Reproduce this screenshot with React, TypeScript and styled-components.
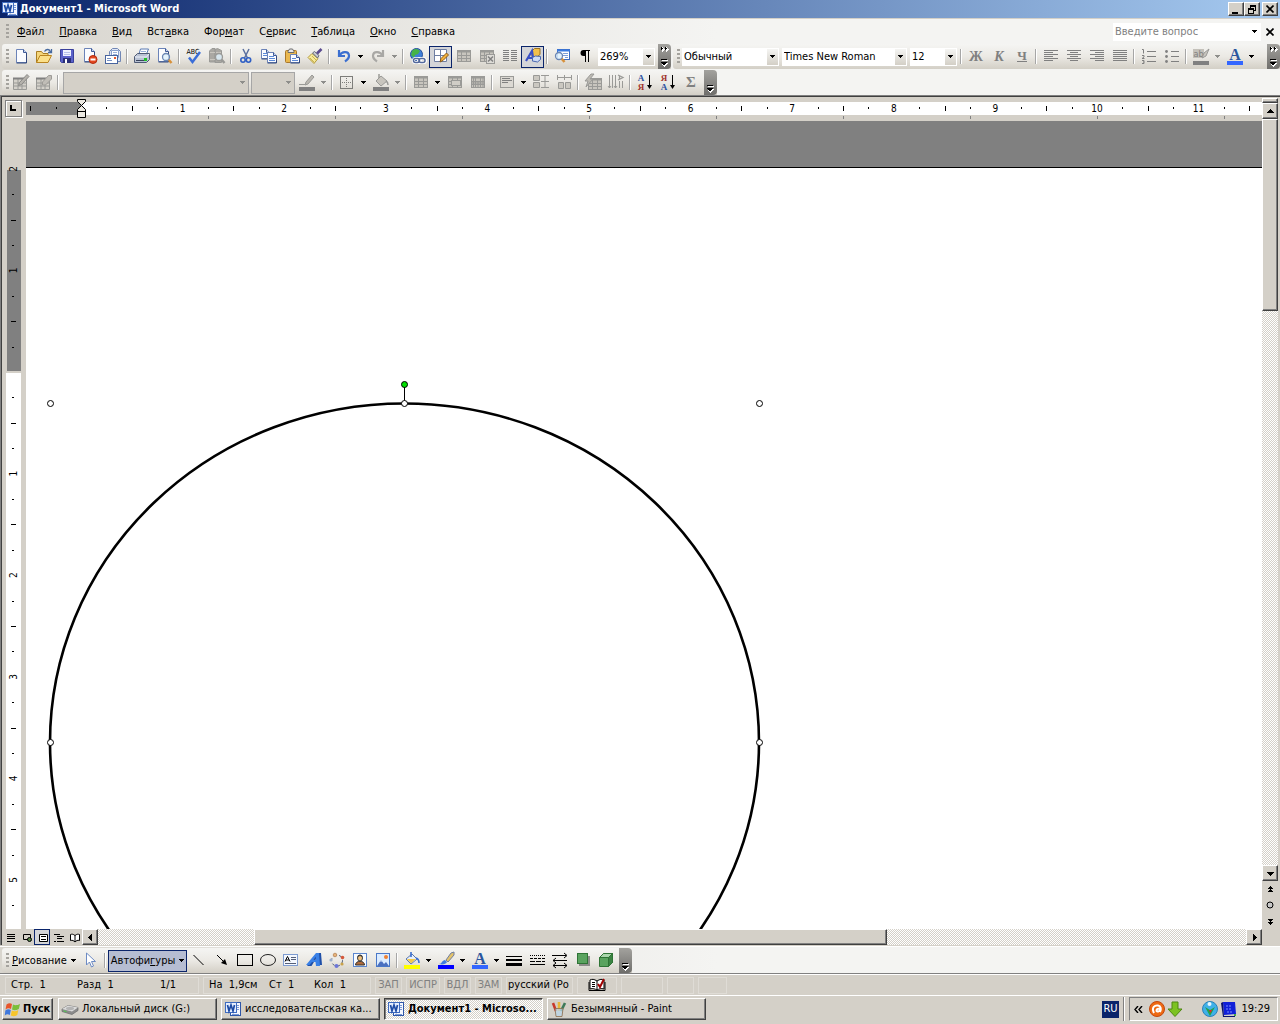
import React from "react";
import styled, { createGlobalStyle, css } from "styled-components";

const UI = `"DejaVu Sans Condensed", "Noto Sans", "Liberation Sans", sans-serif`;
const FACE = "#d4d0c8";
const NAVY = "#0a246a";
const GREY = "#808080";

const Global = createGlobalStyle`
  * { box-sizing: border-box; }
  html, body { margin: 0; padding: 0; }
  body { background: ${FACE}; overflow: hidden; }
  button, input, select { font: inherit; color: inherit; margin: 0; padding: 0; border: 0; background: none; }
  svg { display: block; flex: none; }
`;

const raised = css`
  background: ${FACE};
  border: 1px solid;
  border-color: #fff #404040 #404040 #fff;
  box-shadow: inset -1px -1px 0 ${GREY};
`;

const Window = styled.div`
  display: flex;
  flex-direction: column;
  height: 100vh;
  min-width: 0;
  overflow: hidden;
  font-family: ${UI};
  font-size: 11px;
  line-height: 14px;
  color: #000;
  white-space: nowrap;
  background: ${FACE};
`;

/* ---------- title ---------- */
const TitleBar = styled.header`
  display: flex;
  align-items: center;
  height: 19px;
  flex: none;
  padding: 0 2px;
  gap: 2px;
  border-bottom: 1px solid ${FACE};
  background: linear-gradient(90deg, #0a246a, #a6caf0);
  color: #fff;
`;
const Title = styled.h1`
  flex: 1;
  margin: 0;
  font-size: 11px;
  font-weight: bold;
`;
const CaptionButtons = styled.div`
  display: flex;
  button:last-child { margin-left: 2px; }
`;
const CaptionButton = styled.button`
  ${raised}
  display: grid;
  place-items: center;
  width: 16px;
  height: 14px;
`;

/* ---------- docked bars ---------- */
const Dock = styled.div`
  display: flex;
  flex-direction: column;
  flex: none;
  background: linear-gradient(90deg, #d8d5ce, #f4f4f2 56%);
`;
const MenuBar = styled.nav`
  display: flex;
  align-items: center;
  height: 25px;
  padding: 0 2px 0 6px;
`;
const MenuItem = styled.button`
  height: 20px;
  padding: 0 7px 0 8px;
`;
const Spacer = styled.span`
  flex: 1;
`;
const Ask = styled.label`
  display: flex;
  align-items: center;
  width: 148px;
  height: 18px;
  padding: 0 4px 0 2px;
  background: #fff;
  input { flex: 1; min-width: 0; outline: 0; }
  input::placeholder { color: ${GREY}; opacity: 1; }
`;
const CloseDoc = styled.button`
  display: grid;
  place-items: center;
  width: 17px;
  height: 18px;
`;
const BarRow = styled.div`
  display: flex;
`;
const Toolbar = styled.div<{ $grow?: boolean }>`
  display: flex;
  align-items: center;
  height: 25px;
  flex: ${(p) => (p.$grow ? "1 0 auto" : "none")};
  padding-left: 4px;
  margin-left: 2px;
  border-radius: 3px 0 0 3px;
  background: linear-gradient(#f5f5f3, #ebe9e4 50%, #d3cfc6);
`;
const TopDock = styled(Dock)`
  ${BarRow} + ${BarRow} { margin-top: 1px; }
`;
const Handle = styled.span`
  width: 3px;
  height: 15px;
  flex: none;
  background: repeating-linear-gradient(#a5a39e 0 2px, transparent 2px 4px);
`;
const ToolButton = styled.button<{ $on?: boolean; $wide?: boolean }>`
  display: flex;
  align-items: center;
  justify-content: center;
  gap: 4px;
  flex: none;
  width: ${(p) => (p.$wide ? "auto" : "23px")};
  padding: ${(p) => (p.$wide ? "0 2px" : "0")};
  height: 22px;
  border: 1px solid ${(p) => (p.$on ? NAVY : "transparent")};
  background: ${(p) => (p.$on ? (p.$wide ? "#b6bdd2" : "#d4d5d8") : "none")};
`;
const DropButton = styled.button`
  display: grid;
  place-items: center;
  width: 11px;
  height: 22px;
  flex: none;
`;
const Sep = styled.span`
  width: 6px;
  height: 15px;
  flex: none;
  border-left: 2px solid transparent;
  background: linear-gradient(90deg, #a6a6a6 1px, #fff 1px 2px, transparent 2px) padding-box;
`;
const Combo = styled.label<{ $w: number; $off?: boolean }>`
  display: flex;
  align-items: center;
  width: ${(p) => p.$w}px;
  height: ${(p) => (p.$off ? 22 : 18)}px;
  flex: none;
  margin: 0 ${(p) => (p.$off ? 0 : 1)}px 0 2px;
  border: 1px solid ${(p) => (p.$off ? "#a6a6a6" : "#fff")};
  background: ${(p) => (p.$off ? FACE : "#fff")};
  select { appearance: none; flex: 1; min-width: 0; height: 16px; padding-left: 1px; outline: 0; }
`;
const ComboArrow = styled.span<{ $off?: boolean }>`
  display: grid;
  place-items: center;
  width: 11px;
  height: 16px;
  background: ${(p) => (p.$off ? "none" : "linear-gradient(#f5f5f3, #d3cfc6)")};
  pointer-events: none;
`;
const Cap = styled.button`
  display: flex;
  flex-direction: column;
  align-items: center;
  justify-content: flex-end;
  gap: 7px;
  width: 13px;
  height: 25px;
  margin-left: 2px;
  padding-bottom: 2px;
  flex: none;
  border-radius: 0 4px 4px 0;
  background: linear-gradient(#a3a29e, #6f6e6b);
`;
const CapPush = styled.span`
  flex: 1;
  display: flex;
  justify-content: flex-end;
`;

/* ---------- workspace ---------- */
const Workspace = styled.main`
  display: flex;
  flex: 1;
  min-height: 0;
  padding-right: 2px;
  border-top: 1px solid ${GREY};
  border-left: 1px solid ${GREY};
  box-shadow: inset 1px 1px 0 #404040;
`;
const Column = styled.div`
  display: flex;
  flex-direction: column;
  flex: 1;
  min-width: 0;
  padding-left: 1px;
`;
const RulerRow = styled.div`
  display: flex;
  height: 25px;
  flex: none;
  padding-top: 1px;
`;
const RulerCorner = styled.div`
  width: 24px;
  flex: none;
  padding: 3px 0 0 3px;
`;
const TabButton = styled.button`
  display: grid;
  place-items: center;
  width: 17px;
  height: 17px;
  border: 1px solid ${GREY};
  box-shadow: inset 1px 1px 0 #fff, 1px 1px 0 #fff;
`;
const HRuler = styled.svg`
  flex: 1;
  min-width: 0;
  height: 24px;
`;
const DocRow = styled.div`
  display: flex;
  flex: 1;
  min-height: 0;
`;
const VRuler = styled.svg`
  width: 24px;
  height: 100%;
`;
const Page = styled.section`
  flex: 1;
  min-width: 0;
  background: #fff;
  border-top: 46px solid ${GREY};
  overflow: hidden;
`;
const Sheet = styled.svg`
  width: 100%;
  height: 100%;
`;
const HScroll = styled.div`
  display: flex;
  height: 16px;
  flex: none;
`;
const ViewButton = styled.button<{ $on?: boolean }>`
  display: grid;
  place-items: center;
  width: 16px;
  height: 16px;
  border: 1px solid ${(p) => (p.$on ? NAVY : "transparent")};
  background: ${(p) => (p.$on ? "#d4d5d8" : "none")};
`;
const Track = styled.div<{ $v?: boolean }>`
  display: flex;
  flex: 1;
  flex-direction: ${(p) => (p.$v ? "column" : "row")};
  min-width: 0;
  min-height: 0;
  background: conic-gradient(#fff 25%, ${FACE} 0 50%, #fff 0 75%, ${FACE} 0) 0 0 / 2px 2px;
`;
const Part = styled.span<{ $n: number }>`
  flex: ${(p) => p.$n} 0 0;
`;
const Thumb = styled.span<{ $n: number }>`
  ${raised}
  flex: ${(p) => p.$n} 0 0;
`;
const ScrollButton = styled.button`
  ${raised}
  display: grid;
  place-items: center;
  width: 16px;
  height: 16px;
  flex: none;
`;
const VScroll = styled.div`
  display: flex;
  flex-direction: column;
  width: 16px;
  padding: 2px 0 16px;
`;
const SplitBox = styled.span`
  ${raised}
  height: 5px;
  flex: none;
`;
const BrowseButton = styled.button`
  display: grid;
  place-items: center;
  width: 16px;
  height: 16px;
  flex: none;
`;

/* ---------- bottom ---------- */
const DrawingDock = styled(Dock)`
  padding-top: 1px;
  border-top: 1px solid #fff;
  border-bottom: 1px solid ${GREY};
  margin-top: 1px;
`;
const StatusBar = styled.footer`
  display: flex;
  align-items: center;
  gap: 4px;
  height: 22px;
  flex: none;
  padding: 0 5px;
  border-top: 1px solid #fff;
  border-bottom: 1px solid #fff;
`;
const Panel = styled.div<{ $w: number; $dim?: boolean; $center?: boolean }>`
  display: flex;
  align-items: center;
  justify-content: ${(p) => (p.$center ? "center" : "flex-start")};
  width: ${(p) => p.$w}px;
  height: 17px;
  padding: 0 1px;
  border: 1px solid #dfdcd6;
  color: ${(p) => (p.$dim ? GREY : "#000")};
`;
const Cell = styled.span<{ $w: number }>`
  width: ${(p) => p.$w}px;
  padding-left: 4px;
`;
const TaskBar = styled.footer`
  display: flex;
  align-items: center;
  gap: 4px;
  height: 28px;
  flex: none;
  padding: 0 2px 2px;
`;
const taskBase = css`
  ${raised}
  display: flex;
  align-items: center;
  height: 22px;
`;
const StartButton = styled.button`
  ${taskBase}
  gap: 2px;
  width: 51px;
  margin-right: 1px;
  padding-left: 2px;
  font-weight: bold;
`;
const Task = styled.button<{ $on?: boolean }>`
  ${taskBase}
  flex: 0 1 159px;
  min-width: 0;
  gap: 4px;
  padding: 0 3px;
  text-align: left;
  ${(p) =>
    p.$on &&
    css`
      font-weight: bold;
      border-color: #404040 #fff #fff #404040;
      box-shadow: inset 1px 1px 0 ${GREY};
      background: conic-gradient(#fff 25%, ${FACE} 0 50%, #fff 0 75%, ${FACE} 0) 0 0 / 2px 2px;
    `}
  span { overflow: hidden; text-overflow: ellipsis; }
`;
const Lang = styled.button`
  width: 17px;
  height: 17px;
  background: ${NAVY};
  color: #fff;
`;
const TraySep = styled.span`
  width: 2px;
  height: 24px;
  background: linear-gradient(90deg, ${GREY} 50%, #fff 50%);
`;
const Tray = styled.div`
  display: flex;
  align-items: center;
  gap: 2px;
  width: 149px;
  height: 24px;
  padding: 0 7px 0 4px;
  border: 1px solid;
  border-color: ${GREY} #fff #fff ${GREY};
`;
const TrayGroup = styled.span`
  display: flex;
  gap: 2px;
  margin-right: 17px;
`;

/* ---------- icons ---------- */
const T = ({ w = 5, c = "#000" }: { w?: number; c?: string }) => (
  <svg width={w} height="3" viewBox="0 0 5 3" shapeRendering="crispEdges" aria-hidden="true">
    <path d="M0 0h5v1h-1v1h-1v1h-1v-1h-1v-1h-1z" fill={c} />
  </svg>
);
const G = "#9a9a97";
const Swatch = ({ c }: { c: string }) => <rect x="0" y="13" width="16" height="4" fill={c} />;
const Grid = ({ c = G, f = "#c8c5be" }: { c?: string; f?: string }) => (
  <g stroke={c} fill="none">
    <rect x="1.500" y="2.500" width="13" height="11" fill={f} />
    <path d="M1 3.500h14" strokeWidth="2" />
    <path d="M5.500 4v10M10.500 4v10M2 7.500h12M2 10.500h12" />
  </g>
);
const Paper = ({ x = 2, y = 1, w = 10, h = 13 }) => (
  <g>
    <path d={`M${x + 0.5} ${y + 0.5}h${w - 4}l3 3v${h - 4}h-${w - 1}z`} fill="#fbfcff" stroke="#6b83b8" />
    <path d={`M${x + w - 3.5} ${y + 0.5}v3h3`} fill="#c9d6f0" stroke="#3f5a96" />
    <path d={`M${x + w - 0.5} ${y + 4}v${h - 4}h-${w - 1}`} fill="none" stroke="#33487c" />
  </g>
);
const Lens = ({ x = 10, y = 9, c = "#6a86b4", hc = "#d8913a" }) => (
  <g>
    <path d={`M${x + 2} ${y + 2}l3.500 4`} stroke={hc} strokeWidth="2.500" />
    <circle cx={x} cy={y} r="3.500" fill="#dff1fb" fillOpacity=".85" stroke={c} strokeWidth="1.300" />
  </g>
);
const word = (
  <g>
    <rect x="5.500" y="1.500" width="10" height="13" fill="#f4f7ff" stroke="#2e56a8" />
    <path d="M12 4.500h2M12 6.500h2M12 8.500h2M7 13.500h7" stroke="#7a99d6" />
    <rect x="0.500" y="1.500" width="11" height="10" fill="#e7effe" stroke="#3f6cc0" />
    <path d="M2.500 4l1.500 6 2-6 2 6 1.500-6" fill="none" stroke="#1d4ba5" strokeWidth="1.700" />
  </g>
);

const icons: Record<string, React.ReactNode> = {
  word,
  blank: <Paper x={3} y={1} w={11} h={14} />,
  open: (
    <g>
      <path d="M.5 14.500v-11h5l1.500 2h5v3" fill="#f5d67a" stroke="#a97d22" />
      <path d="M.5 14.500l3.500-7h11.500l-3.500 7z" fill="#fbe08a" stroke="#b98420" />
      <path d="M8.500 3.500c2-3 5-2.500 6 .5M15.500 1v3.500h-3.500" fill="none" stroke="#46699f" strokeWidth="1.300" />
    </g>
  ),
  save: (
    <g>
      <path d="M1.500 1.500h13v13h-12l-1-1z" fill="#5b62c9" stroke="#39409c" />
      <rect x="4" y="2" width="8" height="6" fill="#eef2ff" />
      <path d="M5 4.500h6M5 6.500h6" stroke="#b6c0ea" />
      <rect x="4" y="10" width="8" height="5" fill="#2a2f78" />
      <rect x="6" y="11" width="2" height="4" fill="#fff" />
    </g>
  ),
  perm: (
    <g>
      <Paper x={2} y={0} w={11} h={14} />
      <circle cx="11" cy="11.500" r="4" fill="#e3471f" stroke="#b32d10" />
      <rect x="8.500" y="10.500" width="5" height="2" fill="#fff" />
    </g>
  ),
  mail: (
    <g>
      <path d="M4.500 6.500v-3l3-3h5l3 3v10h-11z" fill="#dfe6f5" stroke="#7187b5" />
      <path d="M6.500 2.500h7v7h-7z" fill="#fff" stroke="#8aa0cb" />
      <path d="M8 4.500h4M8 6.500h4" stroke="#9db0d6" />
      <rect x=".5" y="7.500" width="12" height="8" fill="#fff" stroke="#48649e" />
      <path d="M2 10.500h4M2 12.500h5" stroke="#7691c4" />
      <rect x="9" y="9" width="2" height="2" fill="#e8582b" />
    </g>
  ),
  print: (
    <g>
      <path d="M5 6l1.500-5h8l-2 5" fill="#fff" stroke="#5b7bb4" />
      <path d="M7 3.500h5" stroke="#9bb1da" />
      <path d="M.5 8.500l3-3h12v6l-3 3h-12z" fill="#b9c2d4" stroke="#4e5a74" />
      <path d="M1 9h11.500l2.500-3" fill="none" stroke="#eef2fa" />
      <path d="M2 12.500h9" stroke="#3a445c" />
      <rect x="10" y="10" width="3" height="3" fill="#1fc02a" />
    </g>
  ),
  preview: (
    <g>
      <Paper x={1} y={0} w={11} h={14} />
      <Lens x={9} y={9} />
    </g>
  ),
  spell: (
    <g>
      <text x="7" y="6" fontSize="7" fontFamily={UI} textAnchor="middle" fill="#000">ABC</text>
      <path d="M3 9.500l3.500 4.500 7.500-10" fill="none" stroke="#3b6ed8" strokeWidth="2.500" />
    </g>
  ),
  research: (
    <g>
      <path d="M.5 3l2.500-2.500h3v13.500h-5.500zM6 1.500l2.500-1 4 2v12h-6.500z" fill="#aaa8a3" stroke={G} />
      <path d="M1 4.500h5M7 4.500h5M1 11.500h5" stroke="#c9c6bf" />
      <Lens x={10} y={9} c={G} hc={G} />
    </g>
  ),
  cut: (
    <g fill="none">
      <path d="M5 1l4.500 9M11 1L6.500 10" stroke="#5a6f9e" strokeWidth="1.500" />
      <circle cx="5" cy="12" r="2.200" stroke="#2f5fc4" strokeWidth="1.600" />
      <circle cx="10.500" cy="12" r="2.200" stroke="#2f5fc4" strokeWidth="1.600" />
    </g>
  ),
  copy: (
    <g>
      <Paper x={0} y={1} w={9} h={10} />
      <path d="M2 5.500h4M2 7.500h4" stroke="#5c8ad8" />
      <Paper x={6} y={4} w={10} h={11} />
      <path d="M8 8.500h5M8 10.500h6M8 12.500h6" stroke="#5c8ad8" />
    </g>
  ),
  paste: (
    <g>
      <rect x="1.500" y="2.500" width="11" height="12" rx="1" fill="#eab84e" stroke="#a9772a" />
      <path d="M4 3.500l1.500-2.500h3l1.500 2.500v1h-6z" fill="#e8e8ea" stroke="#6b6b6b" />
      <Paper x={6} y={6} w={10} h={9} />
      <path d="M8 10.500h4M8 12.500h6" stroke="#5c8ad8" />
    </g>
  ),
  painter: (
    <g>
      <path d="M1 9.500l4-4 6 5-4 5z" fill="#f7ea9a" stroke="#b39a3a" />
      <path d="M3 10l4 4M5 8l4 4" stroke="#c9b352" />
      <path d="M5.500 5l2-1.500 4.500 4-1.500 2.500z" fill="#c9cbd2" stroke="#666b78" />
      <path d="M10 5.500l4.500-4.500" stroke="#5a4b8f" strokeWidth="2.600" />
    </g>
  ),
  undo: <path d="M3 2v6h6M3.500 7.500c2-4 9-5 9.500 0 .3 3-2 4.500-4 6" fill="none" stroke="#3b6fd0" strokeWidth="2.200" />,
  redo: <path d="M13 2v6h-6M12.500 7.500c-2-4-9-5-9.500 0-.3 3 2 4.500 4 6" fill="none" stroke="#a9a8a5" strokeWidth="2.200" />,
  link: (
    <g>
      <circle cx="6.500" cy="6.500" r="6" fill="#3f7fd8" stroke="#234f9b" />
      <path d="M2 3c3-3 6-2 8 0l-2 3-3 1-1 3-3-3z" fill="#46b348" />
      <rect x="3.500" y="10.500" width="7" height="4" rx="2" fill="none" stroke="#fff" strokeWidth="3" />
      <rect x="8.500" y="10.500" width="7" height="4" rx="2" fill="none" stroke="#fff" strokeWidth="3" />
      <rect x="3.500" y="10.500" width="6" height="4" rx="2" fill="none" stroke="#53699c" strokeWidth="1.500" />
      <rect x="9" y="10.500" width="6" height="4" rx="2" fill="none" stroke="#53699c" strokeWidth="1.500" />
    </g>
  ),
  borders: (
    <g>
      <path d="M1.500 1.500h12v12h-12zM7.500 2v12M2 7.500h12" fill="#fff" stroke="#6e7ea2" />
      <path d="M7 14l1-3.500 5.500-5.500 2 2-5.500 5.500z" fill="#f3b13b" stroke="#8a5a18" />
    </g>
  ),
  table: <Grid />,
  excel: (
    <g>
      <Grid />
      <rect x="7.500" y="6.500" width="8" height="9" fill="#dedcd7" stroke={G} />
      <path d="M9 8.500l5 5M14 8.500l-5 5" stroke={GREY} strokeWidth="1.500" />
    </g>
  ),
  columns: <path d="M1 2.500h6M1 4.500h6M1 6.500h6M1 8.500h6M1 10.500h6M1 12.500h6M9 2.500h6M9 4.500h6M9 6.500h6M9 8.500h6M9 10.500h6M9 12.500h6" stroke={GREY} />,
  drawing: (
    <g>
      <path d="M7 3l2.500-2.500h5.500v6l-2.500 2h-5.500z" fill="#f3c04b" stroke="#9a7220" />
      <path d="M1 13L7 3l1.500 10M3 10h5" fill="none" stroke="#3a50c4" strokeWidth="2.200" />
      <path d="M7.500 9.500l3-1.500 5 .5v3l-3 2.500-5-1z" fill="#cfdcf6" stroke="#4a68b0" />
    </g>
  ),
  docmap: (
    <g>
      <rect x="3.500" y="1.500" width="12" height="10" fill="#fff" stroke="#3a6ac0" />
      <path d="M3 2.500h13" stroke="#3a7be0" strokeWidth="2" />
      <path d="M9 5.500h5M9 7.500h5M11 9.500h3" stroke="#7c9ed8" />
      <Lens x={5} y={8} />
    </g>
  ),
  pilcrow: <path d="M13 2H6.500a3 3 0 0 0 0 6H8v6h1V3h2v11h1V3h1z" />,
  drawTable: (
    <g>
      <path d="M.5 4.500h13v11h-13zM5 5v10M9 5v10M1 9h12M1 12h12" fill="#d4d1ca" stroke={G} />
      <path d="M0 4.500h12" stroke={GREY} strokeWidth="2" />
      <path d="M5.500 11.500l1-3 7.500-8 2 2-7.500 8z" fill="#b5b2ac" stroke="#8b8b88" />
    </g>
  ),
  eraser: (
    <g>
      <path d="M.5 4.500h13v11h-13zM5 5v10M9 5v10M1 9h12M1 12h12" fill="#d4d1ca" stroke={G} />
      <path d="M0 4.500h10" stroke={GREY} strokeWidth="2" />
      <path d="M6.500 8l6-6.500h3v3.500l-6 6h-3z" fill="#c0bdb7" stroke="#9d9b97" />
    </g>
  ),
  penGrey: (
    <g>
      <path d="M0 10.500h6M6 11l1-3 6-7 2 2-6 7z" fill="#bbb8b1" stroke={G} />
      <Swatch c={GREY} />
    </g>
  ),
  border: (
    <g stroke="#7d7d7a" fill="none">
      <rect x="1.500" y="2.500" width="12" height="12" />
      <path d="M7.500 4v10M3 8.500h10" strokeDasharray="1 1" />
    </g>
  ),
  bucketGrey: (
    <g>
      <path d="M3 7l5-5 6 5-6 5z" fill="#c8c5be" stroke={G} />
      <path d="M6 4v-4M13 7c2 1 2 3 2 4" stroke={G} fill="none" strokeWidth="1.500" />
      <Swatch c={GREY} />
    </g>
  ),
  merge: (
    <g>
      <Grid />
      <rect x="4.500" y="6.500" width="9" height="5" fill="#d0cdc6" stroke={G} />
    </g>
  ),
  split: (
    <g>
      <Grid />
      <path d="M3.500 4v10M8 7v7M13 4v10M2 9h12" stroke={G} />
    </g>
  ),
  cellAlign: (
    <g>
      <rect x="1.500" y="2.500" width="13" height="11" fill="#dcd9d3" stroke={G} />
      <path d="M3 4.500h8M3 6.500h10M3 8.500h6" stroke={GREY} />
    </g>
  ),
  rows: (
    <g fill="#cbc8c1" stroke={G}>
      <path d="M.5 1.500h6v5h-6zM.5 8.500h6v5h-6zM8 1.500h8M8 7.500h8M8 13.500h8M12 2v12" />
    </g>
  ),
  cols: (
    <g fill="#cbc8c1" stroke={G}>
      <path d="M2.500 8.500h5v6h-5zM9.500 8.500h5v6h-5zM1.500 1v5M8.500 1v5M15.500 1v5M2 3.500h13" />
    </g>
  ),
  autoformat: (
    <g>
      <g transform="translate(2 2)"><Grid /></g>
      <path d="M6 0L0 7h3l-2 6 7-8h-3l4-5z" fill="#bdbab3" stroke={G} />
    </g>
  ),
  textdir: (
    <g stroke={G} fill="none">
      <path d="M1.500 1v13M4.500 1v13M7.500 1v13M11.500 7v7M14.500 7v7M0 12l1.500 2 1.500-2M6 12l1.500 2 1.500-2" />
      <path d="M10 1l5 2.500-5 2.500M11.500 2v3" strokeWidth="1.300" />
    </g>
  ),
  sigma: <text x="8" y="13" fontSize="15" fontWeight="bold" fontFamily="Liberation Serif" textAnchor="middle" fill={GREY}>Σ</text>,
  bold: <text x="8" y="13" fontSize="14" fontWeight="bold" fontFamily="Liberation Serif" textAnchor="middle" fill={GREY}>Ж</text>,
  italic: <text x="8" y="13" fontSize="14" fontWeight="bold" fontStyle="italic" fontFamily="Liberation Serif" textAnchor="middle" fill={GREY}>К</text>,
  underline: (
    <g>
      <text x="8" y="12" fontSize="13" fontWeight="bold" fontFamily="Liberation Serif" textAnchor="middle" fill={GREY}>Ч</text>
      <path d="M3 13.500h10" stroke={GREY} />
    </g>
  ),
  left: <path d="M1 2.500h14M1 4.500h9M1 6.500h14M1 8.500h9M1 10.500h14M1 12.500h9" stroke={GREY} />,
  center: <path d="M1 2.500h14M4 4.500h8M1 6.500h14M4 8.500h8M1 10.500h14M4 12.500h8" stroke={GREY} />,
  right: <path d="M1 2.500h14M6 4.500h9M1 6.500h14M6 8.500h9M1 10.500h14M6 12.500h9" stroke={GREY} />,
  justify: <path d="M1 2.500h14M1 4.500h14M1 6.500h14M1 8.500h14M1 10.500h14M1 12.500h14" stroke={GREY} />,
  numbered: (
    <g fill="none" stroke={GREY}>
      <path d="M1 1.500h1.500v4M1 7.500h2v1.500l-2 1.500h2.500M1 12.500h2v3h-2M2 14h1" />
      <path d="M6 3.500h9M6 8.500h9M6 13.500h9" />
    </g>
  ),
  bullets: (
    <g fill={GREY}>
      <circle cx="2.500" cy="3.500" r="1.400" /><circle cx="2.500" cy="8.500" r="1.400" /><circle cx="2.500" cy="13.500" r="1.400" />
      <path d="M7 3.500h8M7 8.500h8M7 13.500h8" stroke={GREY} />
    </g>
  ),
  highlight: (
    <g>
      <rect x="0" y="1" width="11" height="9" fill="#c4c1ba" />
      <text x="5.500" y="9" fontSize="9" fontFamily={UI} textAnchor="middle" fill={GREY}>ab</text>
      <path d="M9 10l2-5 5-4-3 7z" fill="#c8c5be" stroke={G} />
      <Swatch c={GREY} />
    </g>
  ),
  fontColor: (
    <g>
      <text x="8" y="12" fontSize="16" fontWeight="bold" fontFamily="Liberation Serif" textAnchor="middle" fill="#2b559e">A</text>
      <Swatch c="#3366ff" />
    </g>
  ),
  pointer: <path d="M4.500 1v12l3-3 2 5 2-1-2-4.500h4z" fill="#fff" stroke="#6d8bc4" />,
  line: <path d="M2.500 3l10 10" stroke="#000" />,
  arrow: (
    <g>
      <path d="M3 3l7 7" stroke="#000" />
      <path d="M13 13l-6-2 4-4z" />
    </g>
  ),
  rect: <rect x=".5" y="2.500" width="15" height="11" fill="none" stroke="#000" />,
  oval: <ellipse cx="8" cy="8" rx="7.500" ry="5.500" fill="none" stroke="#222" />,
  textbox: (
    <g>
      <rect x=".5" y="2.500" width="14" height="11" fill="#f4f8ff" stroke="#7d9bd0" />
      <path d="M2 9.500l2.500-5 2.500 5M3 8h3" fill="none" stroke="#000" />
      <path d="M8 5.500h5M8 7.500h5M2 11.500h11" stroke="#555f78" />
    </g>
  ),
  wordart: (
    <g fillRule="evenodd">
      <path d="M1 14L12 1h3l1 12h-3l-.5-3h-4.500l-2.500 4zM9 8.500h2.500l-.3-3z" fill="#1f4fa8" />
      <path d="M0 13L10 1h3l1 13h-4l-.5-4h-3.500l-2.500 3zM7.500 8h2.500l-.3-3.500z" fill="#3a80e6" />
    </g>
  ),
  diagram: (
    <g>
      <circle cx="8" cy="8.500" r="5.500" fill="none" stroke="#3f506e" strokeDasharray="2.500 3" />
      <circle cx="6" cy="3" r="1.800" fill="#e7b27a" stroke="#a8703a" strokeWidth=".6" />
      <circle cx="13.500" cy="5.500" r="1.800" fill="#d4583a" />
      <circle cx="13" cy="12" r="1.600" fill="#c9a24a" />
      <circle cx="7.500" cy="14" r="2" fill="#6c76d8" />
      <circle cx="2" cy="8" r="1.600" fill="#9fb0cc" />
    </g>
  ),
  clipart: (
    <g>
      <rect x="1.500" y="1.500" width="13" height="13" fill="#f8fbff" stroke="#5b86ce" />
      <path d="M3.500 13c0-5 9-5 9 0z" fill="#b06a3a" stroke="#333" />
      <ellipse cx="8" cy="6" rx="2.500" ry="3" fill="#f1c07a" stroke="#3c3c3c" />
      <path d="M5.500 5c0-3 5-3 5 0l-2.500-1z" fill="#3c3c3c" />
    </g>
  ),
  picture: (
    <g>
      <rect x="1.500" y="1.500" width="13" height="13" fill="#dcecff" stroke="#4a78c8" />
      <circle cx="11" cy="5" r="2" fill="#f08030" />
      <path d="M2 14l4-6 3 4 2-2 3 4z" fill="#4b70c0" />
      <path d="M5 9.500L6 8l1 1.500" fill="#fff" />
    </g>
  ),
  bucket: (
    <g>
      <path d="M2 7l6-5 5 5-6 5z" fill="#e7effb" stroke="#5877ae" />
      <path d="M7 5V0M12 6c3 1 3 3 3 5" stroke="#3a6fd0" fill="none" strokeWidth="1.600" />
      <path d="M3 7h9l-5 4.500z" fill="#f2c84c" />
      <Swatch c="#ffff00" />
    </g>
  ),
  brush: (
    <g>
      <path d="M1 12c3 0 3-4 6-4l2 2c-1 2-4 3-8 2z" fill="#3f7be0" />
      <path d="M8 8l5-7 3-1v3l-6 7z" fill="#e2c26a" stroke="#6f7da0" />
      <Swatch c="#0000ff" />
    </g>
  ),
  lineStyle: <path d="M0 4h16v1H0zM0 7h16v2H0zM0 11h16v3H0z" />,
  dash: (
    <g stroke="#000">
      <path d="M1 3.500h15" strokeDasharray="1 1" />
      <path d="M1 6.500h15" strokeDasharray="3 1" />
      <path d="M1 9.500h15" strokeDasharray="5 1" />
      <path d="M1 12.500h15" />
    </g>
  ),
  arrows: (
    <g stroke="#000" fill="none">
      <path d="M0 3.500h14M1 8.500h14M1 13.500h14" />
      <path d="M12 1l3 2.500-3 2.500M4 6L1 8.500l3 2.500M4 11l-3 2.500 3 2.500M12 11l3 2.500-3 2.500" />
    </g>
  ),
  shadow: (
    <g>
      <rect x="4" y="4" width="11" height="10" fill="#8d8d8a" />
      <rect x="2.500" y="1.500" width="10" height="10" fill="#5aa35f" stroke="#2f7436" />
    </g>
  ),
  cube: (
    <g stroke="#2f7436">
      <path d="M1.500 5.500l4-4h9v9l-4 4h-9z" fill="#5aa35f" />
      <path d="M1.500 5.500l4-4h9l-4 4z" fill="#a9d6ab" />
      <path d="M10.500 5.500l4-4v9l-4 4z" fill="#3b8443" />
    </g>
  ),
  vNormal: <path d="M4 4.500h8M4 6.500h8M4 8.500h8M4 11.500h8" stroke="#000" />,
  vWeb: (
    <g fill="none" stroke="#000">
      <path d="M4.500 4.500h7v5h-7z" />
      <circle cx="10.500" cy="9.500" r="2" fill="#5c8a4c" />
    </g>
  ),
  vPrint: <path d="M4.500 4.500h8v7h-8zM6 6.500h5M6 9.500h5" fill="#fff" stroke="#000" />,
  vOutline: <path d="M3 4.500h6M6 6.500h7M6 8.500h5M3 11.500h2M6 11.500h7" stroke="#000" />,
  vRead: <path d="M8 5.500c-2-1.500-3-1.500-4.500-1v6c2-.5 3 0 4.500 1.500 1.500-1.500 2.500-2 4.500-1.500v-6c-1.500-.5-2.500-.5-4.500 1zv6" fill="#fff" stroke="#000" />,
  book: (
    <g>
      <path d="M8 4c-3-2-5-2-7-1v9c3-1 5 0 7 1 2-1 4-2 7-1V3c-2-1-4-1-7 1z" fill="#fff" stroke="#000" />
      <path d="M0 5v8.500h16v-8.500M8 4v9M3 5.500h3M3 7.500h3M3 9.500h3" fill="none" stroke="#000" />
      <path d="M9 7l2 3 4-8" fill="none" stroke="#a00000" strokeWidth="2" />
    </g>
  ),
  flag: (
    <g>
      <path d="M1.500 3.500c2-1.500 4-1.500 5.500-.5L6 8C4.500 7 2.500 7 .5 8.500z" fill="#e8552b" />
      <path d="M8 3.500c2 1 4 1 7-.5L13.800 8C11 9.500 9 9.500 7 8.500z" fill="#7bbf3a" />
      <path d="M.3 9.500C2.300 8 4.300 8 5.800 9l-1 5c-1.500-1-3.500-1-5 .5z" fill="#3f78dc" />
      <path d="M6.800 9.500c2 1 4 1 6.500-.5l-1 5c-2.500 1.500-4.500 1.500-6.500.5z" fill="#f6c52c" />
    </g>
  ),
  disk: (
    <g>
      <path d="M0 8l6-3.500 10 2v3L10 13.500 0 10.500z" fill="#8b8b8b" stroke="#6a6a6a" strokeWidth=".7" />
      <path d="M0 8l6-3.500 10 2-6 4z" fill="#dcdcdc" />
      <ellipse cx="8" cy="7.500" rx="4" ry="1.700" fill="#b4b4b4" />
      <path d="M1.500 9.800l3 .9" stroke="#4fd04f" />
    </g>
  ),
  paint: (
    <g>
      <path d="M5 10L2 2" stroke="#c8382b" strokeWidth="2.600" />
      <path d="M8 10V1" stroke="#e7b53a" strokeWidth="2.600" />
      <path d="M10 10l4-8" stroke="#3f7a5a" strokeWidth="2.600" />
      <path d="M4 7.500h8l-1 8H5z" fill="#b8d4e8" fillOpacity=".75" stroke="#8a6a4a" strokeWidth=".8" />
    </g>
  ),
  avast: (
    <g>
      <circle cx="8" cy="8" r="7.500" fill="#ee6a12" stroke="#c4470c" />
      <path d="M5 12c-3-6 1-8 4-7.500 3 .5 3.500 4 2 6.500M11 8.500c0 2-3.500 3-3.500 1s2-2 3.500-2" fill="none" stroke="#fff" strokeWidth="2" />
    </g>
  ),
  download: <path d="M5 1h6v7h4l-7 7.500L1 8h4z" fill="#7cc221" stroke="#4d8710" />,
  globe: (
    <g>
      <circle cx="8" cy="8" r="7.500" fill="#3fb0e8" stroke="#2a82b8" />
      <circle cx="7.500" cy="3" r="2" fill="#e6f7ff" />
      <path d="M3 6l5 3 5-3-5 9z" fill="#23a04a" />
      <path d="M7 9h3l-1.500 3z" fill="#e02828" />
    </g>
  ),
  chip: (
    <g>
      <path d="M3 1h12l1 12-12 1z" fill="#1020d8" />
      <path d="M1 2l2-1 1 14h11v1H3z" fill="#0a1270" />
      <path d="M6 5h6M6 8h6M7 11h5" stroke="#7c8cff" strokeDasharray="2 1" />
      <path d="M14 13h2v2h-2z" fill="#48a848" />
    </g>
  ),
};

const Icon = ({ n, w = 16 }: { n: string; w?: number }) => (
  <svg width={w} height={w + 1} viewBox="0 0 16 17" overflow="visible" aria-hidden="true">{icons[n]}</svg>
);
const SortIcon = ({ a, b, ca, cb }: { a: string; b: string; ca: string; cb: string }) => (
  <svg width="16" height="17" viewBox="0 0 16 17" overflow="visible" aria-hidden="true">
    <g fontSize="9" fontWeight="bold" fontFamily="Liberation Serif" textAnchor="middle">
      <text x="4" y="7" fill={ca}>{a}</text>
      <text x="4" y="16" fill={cb}>{b}</text>
    </g>
    <path d="M12.500 1v12" stroke="#000" />
    <path d="M10 11h5l-2.500 4z" />
  </svg>
);

/* ---------- composite parts ---------- */
const Tools = ({ items }: { items: string[] }) => (
  <>
    {items.map((it, i) => {
      if (it === "|") return <Sep key={i} />;
      if (it === "v" || it === "V")
        return (
          <DropButton key={i} aria-label="Список">
            <T c={it === "v" ? "#000" : "#8e8e8b"} />
          </DropButton>
        );
      const on = it.startsWith("*");
      const n = on ? it.slice(1) : it;
      return (
        <ToolButton key={i} $on={on} aria-label={n} aria-pressed={on || undefined}>
          {n === "sortAZ" ? <SortIcon a="А" b="Я" ca="#2b4fa0" cb="#a0332b" /> : n === "sortZA" ? <SortIcon a="Я" b="А" ca="#a0332b" cb="#2b4fa0" /> : <Icon n={n} />}
        </ToolButton>
      );
    })}
  </>
);
const Select = ({ label, w, value, off }: { label: string; w: number; value?: string; off?: boolean }) => (
  <Combo $w={w} $off={off}>
    <select aria-label={label} disabled={off}>{value ? <option>{value}</option> : <option aria-label="—" />}</select>
    <ComboArrow $off={off}><T c={off ? "#8e8e8b" : "#000"} /></ComboArrow>
  </Combo>
);
const EndCap = ({ more }: { more?: boolean }) => (
  <Cap aria-label="Параметры панелей инструментов">
    {more && (
      <svg width="8" height="6" viewBox="0 0 8 6" shapeRendering="crispEdges" aria-hidden="true">
        <path d="M1 1h1v1h1v1h1v1h-1v1h-1v1h-1zM5 1h1v1h1v1h1v1h-1v1h-1v1h-1z" fill="#fff" />
        <path d="M0 1h1v1h1v1h-1v1h-1zM4 1h1v1h1v1h-1v1h-1z" />
      </svg>
    )}
    <svg width="7" height="8" viewBox="0 0 7 8" shapeRendering="crispEdges" aria-hidden="true">
      <path d="M1 1h6v1h-6zM1 4h6v1h-1v1h-1v1h-1v1h-1v-1h-1z" fill="#fff" />
      <path d="M0 0h6v1h-6zM0 3h6v1h-1v1h-1v1h-2v-1h-1v-1h-1z" />
    </svg>
  </Cap>
);
const Arrow = ({ d }: { d: string }) => (
  <svg width="7" height="7" viewBox="0 0 7 7" shapeRendering="crispEdges" aria-hidden="true"><path d={d} /></svg>
);

const INCH = 101.6;
const range = (a: number, b: number) => Array.from({ length: b - a + 1 }, (_, i) => a + i);
const HorizontalRuler = () => (
  <HRuler aria-label="Горизонтальная линейка">
    <rect x="0" y="5" width="100%" height="13" fill="#fff" />
    <rect x="0" y="5" width="55" height="13" fill={GREY} />
    <g shapeRendering="crispEdges">
      {range(-2, 80).filter((i) => i % 4 !== 0).map((i) => {
        const x = Math.round(55 + (i * INCH) / 4);
        const half = i % 2 === 0;
        return <rect key={i} x={x} y={half ? 9 : 10} width="1" height={half ? 5 : 2} />;
      })}
      {range(1, 14).map((i) => (
        <rect key={i} x={55 + i * 127} y="19" width="1" height="3" fill={GREY} />
      ))}
    </g>
    {range(1, 11).map((i) => (
      <text key={i} x={55 + i * INCH} y="15" fontSize="10" fontFamily={UI} textAnchor="middle">{i}</text>
    ))}
    <path d="M51.500 2.500h8v2l-4 4 4 4v8h-8v-8l4-4-4-4zM51.500 14.500h8" fill="#ece9e2" stroke="#000" />
  </HRuler>
);
const RulerBody = styled.rect`
  height: calc(100% - 252px);
`;
const VerticalRuler = () => (
  <VRuler aria-label="Вертикальная линейка">
    <rect x="5" y="49" width="14" height="201" fill={GREY} />
    <RulerBody x="4" y="252" width="15" fill="#fff" />
    <g shapeRendering="crispEdges">
      {range(-7, 60).filter((i) => i % 4 !== 0).map((i) => {
        const y = Math.round(251 + (i * INCH) / 4);
        const half = i % 2 === 0;
        return <rect key={i} x={half ? 9 : 10} y={y} width={half ? 5 : 2} height="1" />;
      })}
    </g>
    {range(-2, 5).filter(Boolean).map((i) => (
      <text key={i} transform={`translate(15 ${251 + i * INCH}) rotate(-90)`} fontSize="10" fontFamily={UI} textAnchor="middle">{Math.abs(i)}</text>
    ))}
  </VRuler>
);

const menu: [string, string, string][] = [
  ["", "Ф", "айл"], ["", "П", "равка"], ["", "В", "ид"], ["Вст", "а", "вка"], ["Фор", "м", "ат"],
  ["С", "е", "рвис"], ["", "Т", "аблица"], ["", "О", "кно"], ["", "С", "правка"],
];

export default function App() {
  return (
    <Window>
      <Global />
      <TitleBar>
        <Icon n="word" />
        <Title>Документ1 - Microsoft Word</Title>
        <CaptionButtons>
          <CaptionButton aria-label="Свернуть">
            <svg width="10" height="9" aria-hidden="true"><path d="M1 7h6v2h-6z" /></svg>
          </CaptionButton>
          <CaptionButton aria-label="Восстановить">
            <svg width="9" height="9" aria-hidden="true" shapeRendering="crispEdges">
              <path d="M2 0h6v6h-2v-1h1v-3h-4v1h-1zM0 3h6v6h-6zM1 5v3h4v-3z" fillRule="evenodd" />
            </svg>
          </CaptionButton>
          <CaptionButton aria-label="Закрыть">
            <svg width="8" height="8" aria-hidden="true"><path d="M.5 .5l7 7M7.500 .5l-7 7" stroke="#000" strokeWidth="1.600" /></svg>
          </CaptionButton>
        </CaptionButtons>
      </TitleBar>

      <TopDock>
        <MenuBar>
          <Handle />
          {menu.map(([a, b, c]) => (
            <MenuItem key={a + b + c}>{a}<u>{b}</u>{c}</MenuItem>
          ))}
          <Spacer />
          <Ask>
            <input aria-label="Введите вопрос" placeholder="Введите вопрос" />
            <T />
          </Ask>
          <CloseDoc aria-label="Закрыть документ">
            <svg width="8" height="8" aria-hidden="true"><path d="M.5 .5l7 7M7.500 .5l-7 7" stroke="#000" strokeWidth="1.600" /></svg>
          </CloseDoc>
        </MenuBar>
        <BarRow>
          <Toolbar>
            <Handle />
            <Tools items={["blank", "open", "save", "perm", "mail", "|", "print", "preview", "|", "spell", "research", "|", "cut", "copy", "paste", "painter", "|", "undo", "v", "redo", "V", "|", "link", "*borders", "table", "excel", "columns", "*drawing", "|", "docmap", "pilcrow"]} />
            <Select label="Масштаб" w={57} value="269%" />
            <EndCap more />
          </Toolbar>
          <Toolbar $grow>
            <Handle />
            <Select label="Стиль" w={97} value="Обычный" />
            <Select label="Шрифт" w={125} value="Times New Roman" />
            <Select label="Размер" w={47} value="12" />
            <Tools items={["|", "bold", "italic", "underline", "|", "left", "center", "right", "justify", "|", "numbered", "bullets", "|", "highlight", "V", "fontColor", "v"]} />
            <CapPush><EndCap more /></CapPush>
          </Toolbar>
        </BarRow>
        <BarRow>
          <Toolbar>
            <Handle />
            <Tools items={["drawTable", "eraser", "|"]} />
            <Select label="Тип линии" w={186} off />
            <Select label="Толщина линии" w={44} off />
            <Tools items={["penGrey", "V", "|", "border", "v", "bucketGrey", "V", "|", "table", "v", "merge", "split", "|", "cellAlign", "v", "rows", "cols", "|", "autoformat", "textdir", "|", "sortAZ", "sortZA", "sigma"]} />
            <EndCap />
          </Toolbar>
        </BarRow>
      </TopDock>

      <Workspace>
        <Column>
          <RulerRow>
            <RulerCorner>
              <TabButton aria-label="Табуляция">
                <svg width="7" height="7" aria-hidden="true"><path d="M0 0h2v4h4v2h-6z" /></svg>
              </TabButton>
            </RulerCorner>
            <HorizontalRuler />
          </RulerRow>
          <DocRow>
            <VerticalRuler />
            <Page aria-label="Документ">
              <Sheet aria-label="Эллипс">
                <path d="M0 .5h4000" stroke="#000" />
                <ellipse cx="378.500" cy="575.500" rx="354.500" ry="339" fill="#fff" stroke="#000" strokeWidth="2.600" />
                <path d="M378.500 217v20" stroke="#000" />
                <g fill="#fff" stroke="#000">
                  <circle cx="24.500" cy="236.500" r="3" />
                  <circle cx="378.500" cy="236.500" r="3" />
                  <circle cx="733.500" cy="236.500" r="3" />
                  <circle cx="24.500" cy="575.500" r="3" />
                  <circle cx="733.500" cy="575.500" r="3" />
                  <circle cx="378.500" cy="217.500" r="3" fill="#00e000" />
                </g>
              </Sheet>
            </Page>
          </DocRow>
          <HScroll>
            {["vNormal", "vWeb", "vPrint", "vOutline", "vRead"].map((n) => (
              <ViewButton key={n} $on={n === "vPrint"} aria-label={n}><Icon n={n} /></ViewButton>
            ))}
            <ScrollButton aria-label="Влево"><Arrow d="M5 0v7h-1v-1h-1v-1h-1v-1h-1v-1h1v-1h1v-1h1v-1z" /></ScrollButton>
            <Track>
              <Part $n={156} /><Thumb $n={632} /><Part $n={360} />
            </Track>
            <ScrollButton aria-label="Вправо"><Arrow d="M2 0v7h1v-1h1v-1h1v-1h1v-1h-1v-1h-1v-1h-1v-1z" /></ScrollButton>
          </HScroll>
        </Column>
        <VScroll>
          <SplitBox />
          <ScrollButton aria-label="Вверх"><Arrow d="M0 5h7v-1h-1v-1h-1v-1h-1v-1h-1v1h-1v1h-1v1h-1z" /></ScrollButton>
          <Track $v>
            <Thumb $n={191} /><Part $n={555} />
          </Track>
          <ScrollButton aria-label="Вниз"><Arrow d="M0 2h7v1h-1v1h-1v1h-1v1h-1v-1h-1v-1h-1v-1h-1z" /></ScrollButton>
          <BrowseButton aria-label="Предыдущая страница"><Arrow d="M3 0h1v1h1v1h1v1h-5v-1h1v-1h1zM3 3h1v1h1v1h1v1h-5v-1h1v-1h1z" /></BrowseButton>
          <BrowseButton aria-label="Выбор объекта">
            <svg width="8" height="8" aria-hidden="true"><circle cx="4" cy="4" r="3" fill="#c8c8c8" stroke="#000" /></svg>
          </BrowseButton>
          <BrowseButton aria-label="Следующая страница"><Arrow d="M1 1h5v1h-1v1h-1v1h-1v-1h-1v-1h-1zM1 4h5v1h-1v1h-1v1h-1v-1h-1v-1h-1z" /></BrowseButton>
        </VScroll>
      </Workspace>

      <DrawingDock>
        <BarRow>
          <Toolbar>
            <Handle />
            <ToolButton $wide><span><u>Р</u>исование</span><T /></ToolButton>
            <Tools items={["pointer", "|"]} />
            <ToolButton $wide $on aria-pressed><span>Автофи<u>г</u>уры</span><T /></ToolButton>
            <Tools items={["line", "arrow", "rect", "oval", "textbox", "wordart", "diagram", "clipart", "picture", "|", "bucket", "v", "brush", "v", "fontColor", "v", "lineStyle", "dash", "arrows", "shadow", "cube"]} />
            <EndCap />
          </Toolbar>
        </BarRow>
      </DrawingDock>

      <StatusBar>
        <Panel $w={194}><Cell $w={66}>Стр.&nbsp; 1</Cell><Cell $w={83}>Разд&nbsp; 1</Cell><Cell $w={40}>1/1</Cell></Panel>
        <Panel $w={168}><Cell $w={60}>На&nbsp; 1,9см</Cell><Cell $w={45}>Ст&nbsp; 1</Cell><Cell $w={50}>Кол&nbsp; 1</Cell></Panel>
        <Panel $w={27} $dim $center>ЗАП</Panel>
        <Panel $w={34} $dim $center>ИСПР</Panel>
        <Panel $w={27} $dim $center>ВДЛ</Panel>
        <Panel $w={27} $dim $center>ЗАМ</Panel>
        <Panel $w={67}>русский (Ро</Panel>
        <Panel $w={40} $center><Icon n="book" w={16} /></Panel>
        <Panel $w={42} />
        <Panel $w={27} />
        <Panel $w={29} />
      </StatusBar>

      <TaskBar>
        <StartButton><Icon n="flag" />Пуск</StartButton>
        <Task><Icon n="disk" /><span>Локальный диск (G:)</span></Task>
        <Task><Icon n="word" /><span>исследовательская ка...</span></Task>
        <Task $on><Icon n="word" /><span>Документ1 - Microso...</span></Task>
        <Task><Icon n="paint" /><span>Безымянный - Paint</span></Task>
        <Spacer />
        <Lang>RU</Lang>
        <TraySep />
        <Tray>
          <svg width="9" height="7" aria-hidden="true"><path d="M4 0L1 3.500l3 3.500M8 0L5 3.500l3 3.500" fill="none" stroke="#000" strokeWidth="1.400" /></svg>
          <Spacer />
          <TrayGroup>
            <Icon n="avast" />
            <Icon n="download" />
          </TrayGroup>
          <Icon n="globe" />
          <Icon n="chip" />
          <Spacer />
          <time>19:29</time>
        </Tray>
      </TaskBar>
    </Window>
  );
}
